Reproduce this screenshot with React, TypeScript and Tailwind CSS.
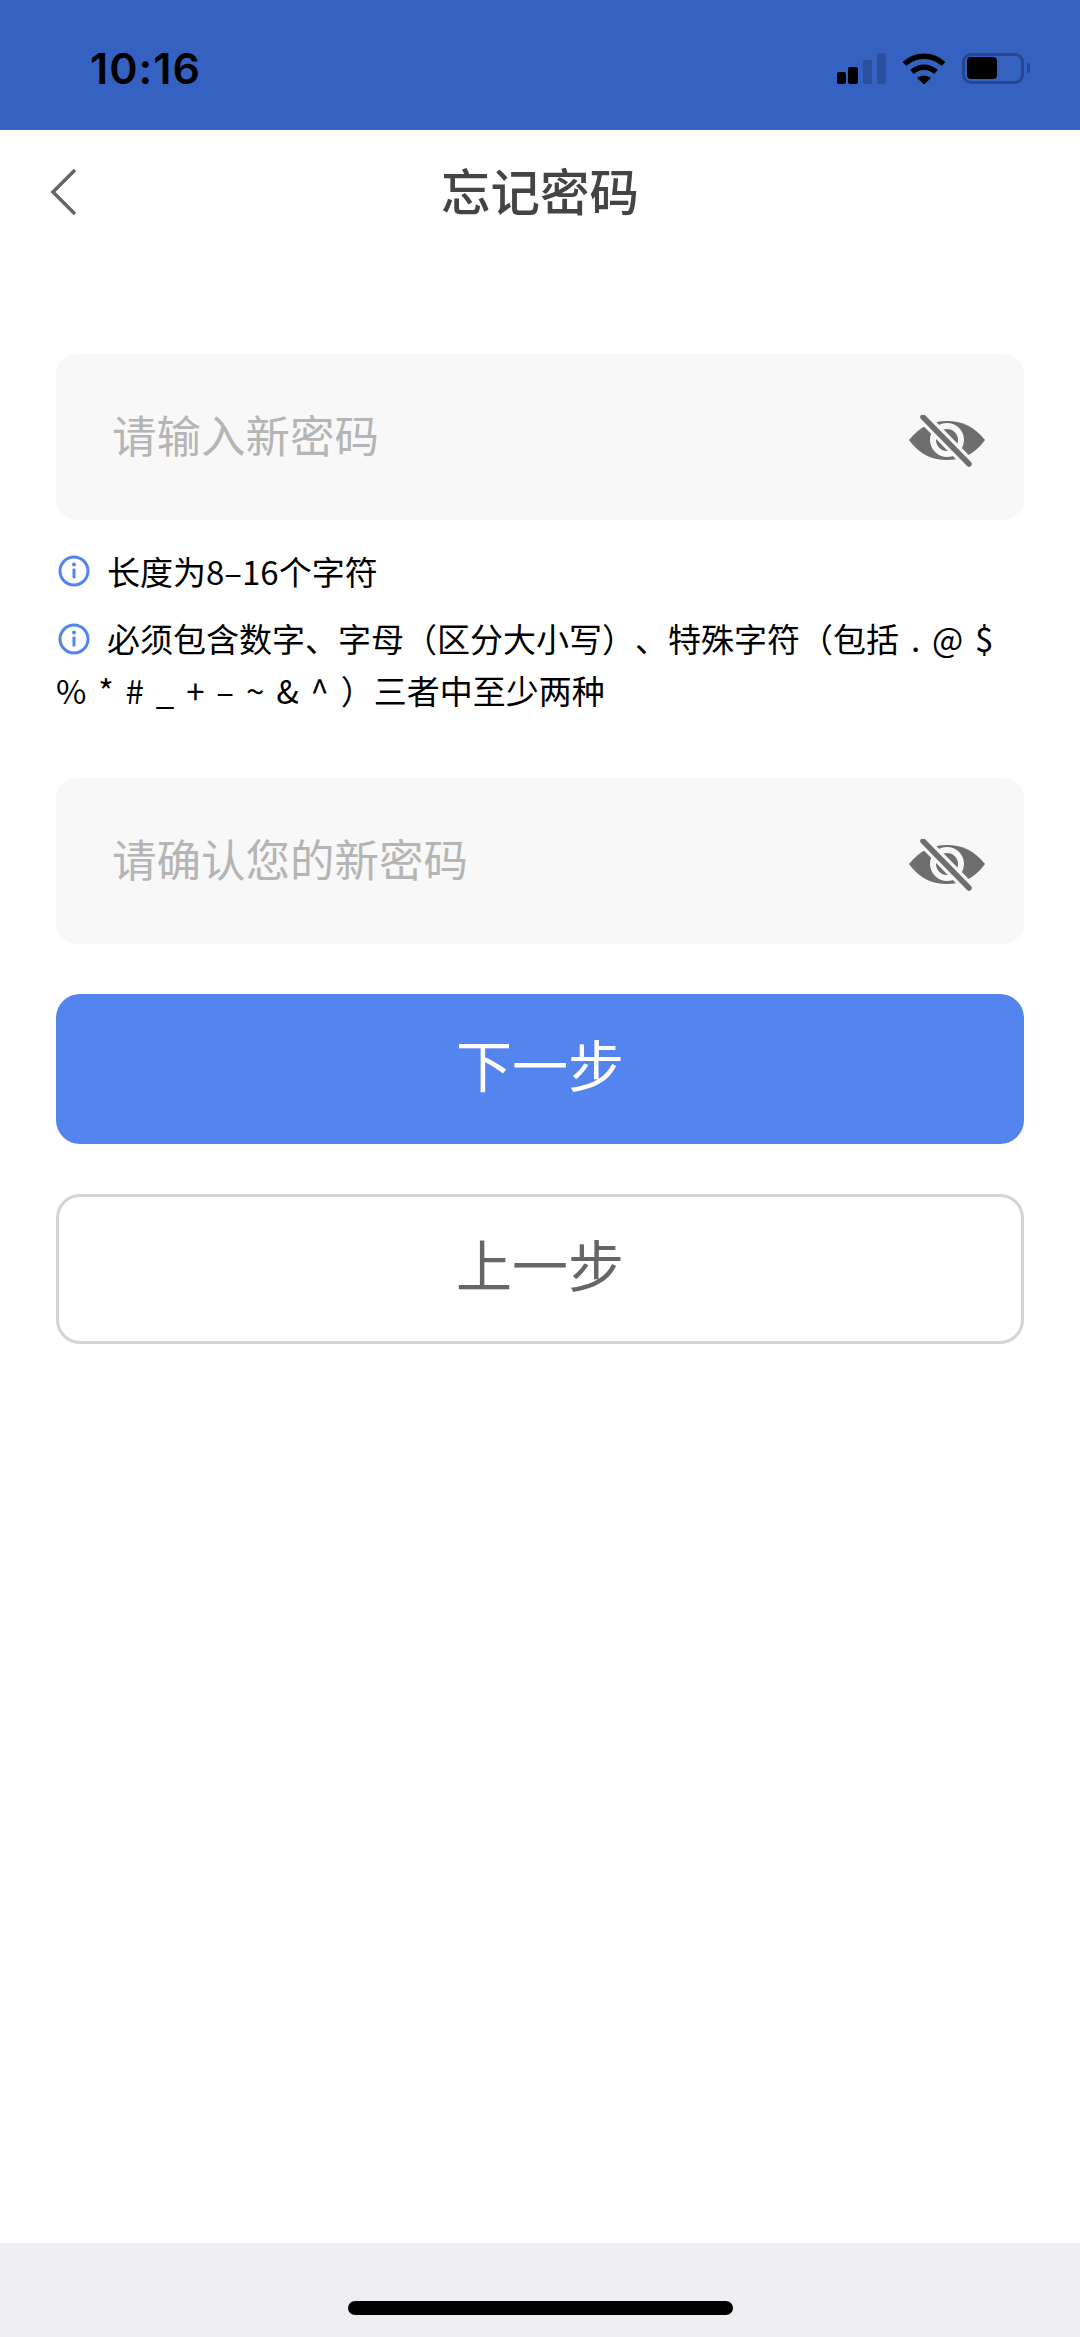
function InfoIcon({ className }: { className?: string }) {
  return (
    <svg viewBox="0 0 32 32" className={className} fill="none">
      <circle cx="16" cy="16" r="14" stroke="#5484ee" strokeWidth="3" />
      <rect x="14.5" y="13.5" width="3" height="10" rx="1" fill="#5484ee" />
      <circle cx="16" cy="9.5" r="2" fill="#5484ee" />
    </svg>
  );
}

function HiddenEye() {
  return (
    <svg viewBox="0 0 78 52" className="h-[52px] w-[78px]" fill="none">
      <path d="M1 25 C12 11 25 6 39 6 C53 6 66 11 77 25 C66 40 53 45 39 45 C25 45 12 40 1 25 Z" fill="#6e6e6e" />
      <circle cx="39" cy="25" r="17" fill="#f8f8f8" />
      <circle cx="39" cy="25" r="11" fill="#6e6e6e" />
      <path d="M15 2 L61 49" stroke="#f8f8f8" strokeWidth="12" />
      <path d="M15 2 L61 49" stroke="#6e6e6e" strokeWidth="5.5" strokeLinecap="round" />
    </svg>
  );
}

function PasswordField({ placeholder }: { placeholder: string }) {
  return (
    <div className="flex h-[166px] items-center justify-between rounded-[20px] bg-[#f8f8f8] pl-[56px] pr-[38px]">
      <span className="pb-[6px] text-[44.5px] leading-[60px] text-[#b5b5b5]">{placeholder}</span>
      <span className="mt-[8px] flex">
        <HiddenEye />
      </span>
    </div>
  );
}

function StatusBar() {
  return (
    <div className="flex h-[130px] items-center justify-between bg-[#3561c0] pl-[90px] pr-[50px] pt-[6px]">
      <span className="[font-family:Inter,sans-serif] text-[43px] font-semibold leading-[50px] tracking-[1px] text-black">
        10:16
      </span>
      <div className="flex items-center gap-[16px]">
        <div className="flex h-[31px] items-end gap-[2px]">
          <div className="h-[12px] w-[9px] rounded-[2px] bg-black" />
          <div className="h-[17px] w-[10px] rounded-[2px] bg-black" />
          <div className="ml-[3px] h-[24px] w-[9px] rounded-[2px] bg-[#2a4f9f]" />
          <div className="ml-[3px] h-[31px] w-[9px] rounded-[2px] bg-[#2a4f9f]" />
        </div>
        <svg viewBox="0 0 44 31" className="h-[31px] w-[44px]" fill="none">
          <path d="M2.5 11 C13 0.5 31 0.5 41.5 11" stroke="#000" strokeWidth="5.5" />
          <path d="M10 19 C17 12.5 27 12.5 34 19" stroke="#000" strokeWidth="5.5" />
          <path d="M15 25 C19 21.5 25 21.5 29 25 L22 31.5 Z" fill="#000" />
        </svg>
        <div className="flex items-center gap-[3px]">
          <div className="flex h-[31px] w-[62px] items-center rounded-[9px] border-[3px] border-[#26478f] pl-[2px]">
            <div className="h-[22px] w-[30px] rounded-[4px] bg-black" />
          </div>
          <div className="h-[10px] w-[3px] rounded-r-[3px] bg-[#26478f]" />
        </div>
      </div>
    </div>
  );
}

export default function App() {
  return (
    <div className="flex h-[2337px] w-[1080px] flex-col bg-white [font-family:'Noto_Sans_CJK_SC','Noto_Sans',sans-serif]">
      <StatusBar />

      <div className="grid h-[124px] grid-cols-3 items-center">
        <div className="pl-[50px]">
          <svg viewBox="0 0 28 48" className="h-[48px] w-[28px]" fill="none">
            <path d="M25 2 L3 24 L25 46" stroke="#666666" strokeWidth="3.5" />
          </svg>
        </div>
        <h1 className="whitespace-nowrap pb-[4px] text-center text-[49.5px] font-medium leading-[64px] text-[#444444]">忘记密码</h1>
      </div>

      <main className="flex flex-1 flex-col px-[56px] pt-[100px]">
        <PasswordField placeholder="请输入新密码" />

        <div className="mt-[31px] flex h-[40px] items-center gap-[17px] pl-[2px]">
          <InfoIcon className="h-[32px] w-[32px]" />
          <span className="text-[33px] leading-[40px] text-black">长度为8–16个字符</span>
        </div>

        <p className="mt-[21px] text-[33px] leading-[52px] text-black [text-spacing-trim:space-all] [word-spacing:4.5px]">
          <InfoIcon className="mb-[8px] ml-[2px] mr-[17px] inline-block h-[32px] w-[32px]" />
          必须包含数字、字母（区分大小写）、特殊字符（包括 . @ $
          <br />% * # _ + – ~ &amp; ^ ）三者中至少两种
        </p>

        <div className="mt-[62px]">
          <PasswordField placeholder="请确认您的新密码" />
        </div>

        <button className="mt-[50px] h-[150px] rounded-[24px] bg-[#5484ee] pb-[12px] text-[56px] text-white">下一步</button>
        <button className="mt-[50px] h-[150px] rounded-[24px] border-[3px] border-[#d4d4d4] bg-white pb-[12px] text-[56px] text-[#666666]">
          上一步
        </button>
      </main>

      <div className="flex h-[94px] justify-center bg-[#eeeef3] pt-[58px]">
        <div className="h-[14px] w-[385px] rounded-full bg-black" />
      </div>
    </div>
  );
}
